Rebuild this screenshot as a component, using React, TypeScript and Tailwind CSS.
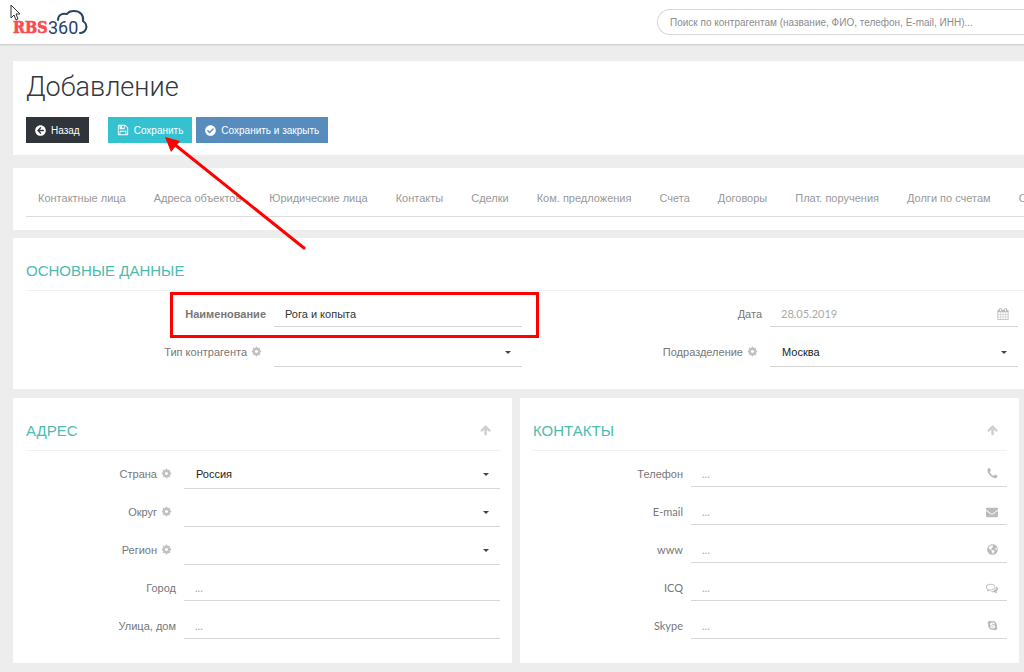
import { useState } from "react";
import type { ReactNode } from "react";
import { FaArrowCircleLeft, FaCheckCircle, FaGlobeAmericas, FaSkype } from "react-icons/fa";

const paths = {
  cog: "M1152 896q0-106-75-181t-181-75-181 75-75 181 75 181 181 75 181-75 75-181zm512-109v222q0 12-8 23t-20 13l-185 28q-19 54-39 91 35 50 107 138 10 12 10 25t-9 23q-27 37-99 108t-94 71q-12 0-26-9l-138-108q-44 23-91 38-16 136-29 186-7 28-36 28h-222q-14 0-24.5-8.5t-11.5-21.5l-28-184q-49-16-90-37l-141 107q-10 9-25 9-14 0-25-11-126-114-165-168-7-10-7-23 0-12 8-23 15-21 51-66.5t54-70.5q-27-50-41-99l-183-27q-13-2-21-12.5t-8-23.5v-222q0-12 8-23t19-13l186-28q14-46 39-92-40-57-107-138-10-12-10-24 0-10 9-23 26-36 98.5-107.5t94.5-71.5q13 0 26 10l138 107q44-23 91-38 16-136 29-186 7-28 36-28h222q14 0 24.5 8.5t11.5 21.5l28 184q49 16 90 37l142-107q9-9 24-9 13 0 25 10 129 119 165 170 7 8 7 22 0 12-8 23-15 21-51 66.5t-54 70.5q26 50 41 98l183 28q13 2 21 12.5t8 23.5z",
  phone: "M1600 1240q0 27-10 70.5t-21 68.5q-21 50-122 106-94 51-186 51-27 0-53-3.5t-57.5-12.5-47-14.5-55.5-20.5-49-18q-98-35-175-83-127-79-264-216t-216-264q-48-77-83-175-3-9-18-49t-20.5-55.5-14.5-47-12.5-57.5-3.5-53q0-92 51-186 56-101 106-122 25-11 68.5-21t70.5-10q14 0 21 3 18 6 53 76 11 19 30 54t35 63.5 31 53.5q3 4 17.5 25t21.5 35.5 7 28.5q0 20-28.5 50t-62 55-62 53-28.5 46q0 9 5 22.5t8.5 20.5 14 24 11.5 19q76 137 174 235t235 174q2 1 19 11.5t24 14 20.5 8.5 22.5 5q18 0 46-28.5t53-62 55-62 50-28.5q14 0 28.5 7t35.5 21.5 25 17.5q25 15 53.5 31t63.5 35 54 30q70 35 76 53 3 7 3 21z",
  envelope: "M1792 710v794q0 66-47 113t-113 47h-1472q-66 0-113-47t-47-113v-794q44 49 101 87 362 246 497 345 57 42 92.5 65.5t94.5 48 110 24.5h2q51 0 110-24.5t94.5-48 92.5-65.5q170-123 498-345 57-39 100-87zm0-294q0 79-49 151t-122 123q-376 261-468 325-10 7-42.5 31t-54 38.5-52 32.5-57.5 27-50 9h-2q-23 0-50-9t-57.5-27-52-32.5-54-38.5-42.5-31q-91-64-262-182.5t-205-142.5q-62-42-117-115.5t-55-136.5q0-78 41.5-130t118.5-52h1472q65 0 112.5 47t47.5 113z",
  floppy: "M512 1536h768v-384h-768v384zm896 0h128v-896q0-14-10-38.5t-20-34.5l-281-281q-10-10-34-20t-39-10v416q0 40-28 68t-68 28h-576q-40 0-68-28t-28-68v-416h-128v1280h128v-416q0-40 28-68t68-28h832q40 0 68 28t28 68v416zm-384-928v-320q0-13-9.5-22.5t-22.5-9.5h-192q-13 0-22.5 9.5t-9.5 22.5v320q0 13 9.5 22.5t22.5 9.5h192q13 0 22.5-9.5t9.5-22.5zm640 32v928q0 40-28 68t-68 28h-1344q-40 0-68-28t-28-68v-1344q0-40 28-68t68-28h928q40 0 88 20t76 48l280 280q28 28 48 76t20 88z",
  calendar: "M192 1664h288v-288h-288v288zm352 0h320v-288h-320v288zm-352-352h288v-320h-288v320zm352 0h320v-320h-320v320zm-352-384h288v-288h-288v288zm736 736h320v-288h-320v288zm-384-736h320v-288h-320v288zm768 736h288v-288h-288v288zm-384-352h320v-320h-320v320zm-352-864v-288q0-13-9.5-22.5t-22.5-9.5h-64q-13 0-22.5 9.5t-9.5 22.5v288q0 13 9.5 22.5t22.5 9.5h64q13 0 22.5-9.5t9.5-22.5zm736 864h288v-320h-288v320zm-384-384h320v-288h-320v288zm384 0h288v-288h-288v288zm32-480v-288q0-13-9.5-22.5t-22.5-9.5h-64q-13 0-22.5 9.5t-9.5 22.5v288q0 13 9.5 22.5t22.5 9.5h64q13 0 22.5-9.5t9.5-22.5zm384-64v1280q0 52-38 90t-90 38h-1408q-52 0-90-38t-38-90v-1280q0-52 38-90t90-38h128v-96q0-66 47-113t113-47h64q66 0 113 47t47 113v96h384v-96q0-66 47-113t113-47h64q66 0 113 47t47 113v96h128q52 0 90 38t38 90z",
  comments: "M704 384q-153 0-286 52t-211.5 141-78.5 191q0 82 53 158t149 132l97 56-35 84q34-20 62-39l44-31 53 10q78 14 153 14 153 0 286-52t211.5-141 78.5-191-78.5-191-211.5-141-286-52zm0-128q191 0 353.5 68.5t256.5 186.5 94 257-94 257-256.5 186.5-353.5 68.5q-86 0-176-16-124 88-278 128-36 9-86 16h-3q-11 0-20.5-8t-11.5-21q-1-3-1-6.5t.5-6.5 2-6l2.5-5 3.5-5.5 4-5 4.5-5 4-4.5q5-6 23-25t26-29.5 22.5-29 25-38.5 20.5-44q-124-72-195-177t-71-224q0-139 94-257t256.5-186.5 353.5-68.5zm822 1169q10 24 20.5 44t25 38.5 22.5 29 26 29.5 23 25q1 1 4 4.5t4.5 5 4 5 3.5 5.5l2.5 5 2 6 .5 6.5-1 6.5q-3 14-13 22t-22 7q-50-7-86-16-154-40-278-128-90 16-176 16-271 0-472-132 58 4 88 4 161 0 309-45t264-129q125-92 192-212t67-254q0-77-23-152 129 71 204 178t75 230q0 120-71 224.5t-195 176.5z",
  arrowUp: "M1611 971q0 51-37 90l-75 75q-38 38-91 38-54 0-90-38l-294-293v704q0 52-37.5 84.5t-90.5 32.5h-128q-53 0-90.5-32.5t-37.5-84.5v-704l-294 293q-36 38-90 38t-90-38l-75-75q-38-38-38-90 0-53 38-91l651-651q35-37 90-37 54 0 91 37l651 651q37 39 37 91z",
};

function Icon({ name, className }: { name: keyof typeof paths; className: string }) {
  return (
    <svg viewBox="0 0 1792 1792" fill="currentColor" className={className} aria-hidden="true">
      <path d={paths[name]} />
    </svg>
  );
}

const tabs = [
  "Контактные лица",
  "Адреса объектов",
  "Юридические лица",
  "Контакты",
  "Сделки",
  "Ком. предложения",
  "Счета",
  "Договоры",
  "Плат. поручения",
  "Долги по счетам",
  "Оплаты",
];

const contacts = [
  { id: "phone", label: "Телефон", icon: <Icon name="phone" className="size-[13px]" /> },
  { id: "email", label: "E-mail", latin: true, icon: <Icon name="envelope" className="size-3" /> },
  { id: "www", label: "www", latin: true, icon: <FaGlobeAmericas className="size-[11px]" /> },
  { id: "icq", label: "ICQ", latin: true, icon: <Icon name="comments" className="size-3" /> },
  { id: "skype", label: "Skype", latin: true, icon: <FaSkype className="size-[11px]" /> },
];

function Logo() {
  return (
    <a href="#" aria-label="RBS360" className="block">
      <svg width="92" height="44" viewBox="0 0 92 44">
        <text
          x="13"
          y="33"
          fontSize="16"
          fontWeight="700"
          fill="#fb4a4f"
          stroke="#fb4a4f"
          strokeWidth="0.6"
          className="font-['DejaVu_Serif_Condensed','DejaVu_Serif',serif]"
        >
          RBS
        </text>
        <text x="48" y="34" fontSize="18" fill="#2c4266" className="font-[Roboto,sans-serif]">
          360
        </text>
        <path
          d="M58 20c0-5 4-7 9-6 2-3 4-3 7-3 6 0 10 4 9 10 3 2 4 5 3 8-1 2-3 4-6 4"
          fill="none"
          stroke="#2c4266"
          strokeWidth="2"
          strokeLinecap="round"
        />
      </svg>
    </a>
  );
}

function Section({ title, collapsible, children }: { title: string; collapsible?: boolean; children: ReactNode }) {
  return (
    <section className={collapsible ? "bg-white pr-3 pb-[22px] pl-[13px]" : "bg-white pb-[22px] pl-[13px]"}>
      <div className="flex h-[53px] items-end justify-between border-b border-[#eef0f2] pb-[9px]">
        <h2 className="text-[15px] leading-5 text-[#4dbbb0]">{title}</h2>
        {collapsible && (
          <button type="button" aria-label="Свернуть" className="mr-2 mb-[5px] text-[#d0d0d0]">
            <Icon name="arrowUp" className="size-3" />
          </button>
        )}
      </div>
      {children}
    </section>
  );
}

interface FieldProps {
  id: string;
  label: string;
  wide?: boolean;
  bold?: boolean;
  latin?: boolean;
  value?: string;
  placeholder?: string;
  icon?: ReactNode;
  select?: boolean;
  highlight?: boolean;
}

function Field({ id, label, wide, bold, latin, value = "", placeholder, icon, select, highlight }: FieldProps) {
  const [current, setCurrent] = useState(value);

  return (
    <div className={wide ? "relative grid h-[38px] grid-cols-[1fr_2fr]" : "relative grid h-[38px] grid-cols-2"}>
      <div
        className={
          latin
            ? "flex h-[30px] items-center justify-end pt-[15px] pr-2 font-[Lato,sans-serif] text-[11px] leading-4 text-[#777]"
            : "flex h-[30px] items-center justify-end gap-1 pt-[15px] pr-2 text-[11px] leading-4 text-[#777]"
        }
      >
        <label htmlFor={id} className={bold ? "font-bold" : ""}>
          {label}
        </label>
        {select && (
          <button type="button" aria-label="Настроить список" className="mr-1 text-[#c0c0c0]">
            <Icon name="cog" className="size-[11px]" />
          </button>
        )}
      </div>
      {select ? (
        <div className="relative h-[38px] border-b border-[#d6d6d6]">
          <select
            id={id}
            value={current}
            onChange={(e) => setCurrent(e.target.value)}
            className="h-full w-full appearance-none bg-transparent px-3 pt-2.5 text-[11px] text-[#222] outline-none"
          >
            <option value={value}>{value}</option>
          </select>
          <svg viewBox="0 0 6 3" className="pointer-events-none absolute top-[22px] right-[11px] h-[3px] w-1.5" fill="#444">
            <path d="M0 0h6L3 3z" />
          </svg>
        </div>
      ) : (
        <div className="flex h-9 items-center border-b border-[#d6d6d6] pt-2.5 pr-2 text-[#bbb]">
          <input
            id={id}
            value={current}
            placeholder={placeholder}
            onChange={(e) => setCurrent(e.target.value)}
            className="h-full min-w-0 flex-1 bg-transparent px-[11px] text-[11px] text-[#333] outline-none placeholder:font-[Lato,sans-serif] placeholder:text-[#aaa]"
          />
          {icon && <span className="flex w-3.5 justify-center">{icon}</span>}
        </div>
      )}
      {highlight && (
        <div className="pointer-events-none absolute top-px -right-[17px] bottom-[-9px] left-[144px] border-3 border-[#ff0000]" />
      )}
    </div>
  );
}

export default function App() {
  return (
    <div className="min-h-screen overflow-hidden bg-[#ededed] pb-[9px] font-['Liberation_Sans',sans-serif]">
      <header className="relative flex h-[45px] items-center justify-between border-b border-[#cfcfcf] bg-white shadow-xs">
        <Logo />
        <input
          type="search"
          aria-label="Поиск"
          placeholder="Поиск по контрагентам (название, ФИО, телефон, E-mail, ИНН)..."
          className="h-[26px] w-[367px] rounded-l-full border border-r-0 border-[#d8d8dc] px-3 text-[10px] outline-none placeholder:text-[#8c8c8c]"
        />
        <svg className="absolute top-1 left-2.5" width="12" height="18" viewBox="0 0 12 18">
          <path d="M1 1v13l3-3 2 5 2-1-2-5h4z" fill="#fff" stroke="#333" strokeWidth="1" />
        </svg>
      </header>

      <main className="relative pt-4 pl-[13px]">
        <section className="bg-white px-[13px] pt-2 pb-3">
          <h1 className="font-[Roboto,sans-serif] text-[27px] leading-9 font-light text-[#33383d]">Добавление</h1>
          <div className="mt-3 flex gap-1 text-[10px] text-white">
            <button type="button" className="mr-[15px] flex h-[26px] items-center gap-[5px] bg-[#2f353b] px-[9px]">
              <FaArrowCircleLeft className="size-[11px]" />
              Назад
            </button>
            <button type="button" className="flex h-[26px] items-center gap-[5px] bg-[#35c2d0] px-[9px]">
              <Icon name="floppy" className="size-3" />
              Сохранить
            </button>
            <button type="button" className="flex h-[26px] items-center gap-[5px] bg-[#588cbc] px-[9px]">
              <FaCheckCircle className="size-[11px]" />
              Сохранить и закрыть
            </button>
          </div>
        </section>

        <nav className="mt-[13px] overflow-hidden bg-white pb-[13px] pl-[13px]">
          <div className="flex h-[49px] items-end gap-7 border-b border-[#ddd] pb-2.5 pl-3 text-[11px] leading-4 text-[#999]">
            {tabs.map((tab) => (
              <a key={tab} href="#" className="shrink-0">
                {tab}
              </a>
            ))}
          </div>
        </nav>

        <div className="mt-2">
          <Section title="ОСНОВНЫЕ ДАННЫЕ">
            <div className="mr-1.5 grid grid-cols-2">
              <Field id="name" label="Наименование" bold value="Рога и копыта" highlight />
              <Field id="date" label="Дата" placeholder="28.05.2019" icon={<Icon name="calendar" className="size-3" />} />
              <Field id="type" label="Тип контрагента" select />
              <Field id="division" label="Подразделение" select value="Москва" />
            </div>
          </Section>
        </div>

        <div className="mt-[9px] mr-[5px] grid grid-cols-2 gap-2">
          <Section title="АДРЕС" collapsible>
            <Field id="country" label="Страна" wide select value="Россия" />
            <Field id="district" label="Округ" wide select />
            <Field id="region" label="Регион" wide select />
            <Field id="city" label="Город" wide placeholder="..." />
            <Field id="street" label="Улица, дом" wide placeholder="..." />
          </Section>
          <Section title="КОНТАКТЫ" collapsible>
            {contacts.map(({ id, label, latin, icon }) => (
              <Field key={id} id={id} label={label} latin={latin} wide placeholder="..." icon={icon} />
            ))}
          </Section>
        </div>

        {/* Pointer to the save button */}
        <svg className="pointer-events-none absolute top-[90px] left-[164px]" width="144" height="116" viewBox="0 0 144 116">
          <path d="M10 9l130 104" stroke="#ff0000" strokeWidth="3" strokeLinecap="round" />
          <path d="M1 2l15 4-9 11z" fill="#ff0000" />
        </svg>
      </main>
    </div>
  );
}
